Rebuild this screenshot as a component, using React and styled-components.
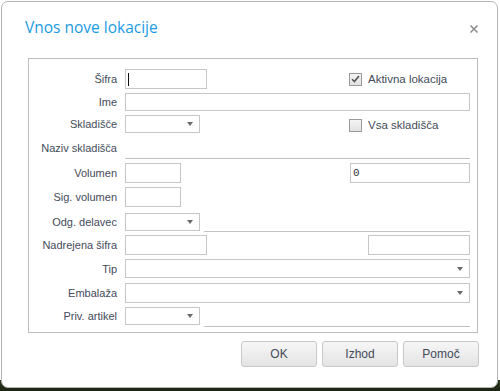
import React from "react";
import styled, { createGlobalStyle } from "styled-components";

const GlobalStyle = createGlobalStyle`
  html, body {
    margin: 0;
    padding: 0;
  }
  body {
    width: 500px;
    height: 391px;
    overflow: hidden;
    background: linear-gradient(#fff 0, #fff 380px, #2a3a1c 380px, #1c2414 391px);
    font-family: "Liberation Sans", Arial, sans-serif;
  }
`;

const Dialog = styled.div`
  box-sizing: border-box;
  margin: 1px 0 0 1px;
  width: 497px;
  height: 387px;
  background: #fff;
  border: 1px solid #b4b4b4;
  border-radius: 7px;
`;

const Header = styled.div`
  height: 56px;
  display: flex;
  align-items: flex-start;
  justify-content: space-between;
  padding: 0 18px 0 23px;
`;

const Title = styled.h1`
  margin: 14px 0 0;
  font-family: "Open Sans", "Noto Sans", sans-serif;
  font-weight: 400;
  font-size: 15.5px;
  line-height: 22px;
  color: #1b9be3;
`;

const Close = styled.button`
  margin-top: 22px;
  padding: 0;
  border: none;
  background: none;
  width: 10px;
  height: 10px;
  display: flex;
  cursor: pointer;
`;

const Fieldset = styled.div`
  box-sizing: border-box;
  margin-left: 26px;
  width: 450px;
  border: 1px solid #bdbdbd;
  padding: 10px 7px 6px 0;
  display: grid;
  grid-template-columns: 88px 345px;
  grid-template-rows: 24px 22px 26px 22px 24px 26px 22px 24px 24px 24px 19px;
  column-gap: 8px;
  align-items: start;
`;

const Label = styled.div`
  height: ${(p) => p.$h || 20}px;
  display: flex;
  align-items: center;
  justify-content: flex-end;
  font-size: 11px;
  color: #444b5a;
  white-space: nowrap;
`;

const Field = styled.div`
  display: flex;
  align-items: flex-start;
  gap: 4px;
`;

const TextBox = styled.div`
  box-sizing: border-box;
  width: ${(p) => p.$w || 345}px;
  height: ${(p) => p.$h || 20}px;
  margin-left: ${(p) => (p.$right ? "auto" : "0")};
  border: 1px solid #c6c6c6;
  background: #fff;
  display: flex;
  align-items: center;
  padding-left: 2px;
  font-family: "Liberation Mono", "DejaVu Sans Mono", monospace;
  font-size: 11px;
  color: #333;
`;

const Caret = styled.span`
  width: 1px;
  height: 13px;
  background: #111;
`;

const Select = styled.div`
  box-sizing: border-box;
  width: ${(p) => p.$w || 75}px;
  height: ${(p) => p.$h || 18}px;
  border: 1px solid #c6c6c6;
  background: #fff;
  display: flex;
  align-items: center;
  justify-content: flex-end;
  padding-right: 6px;
  flex-shrink: 0;
`;

const Arrow = styled.span`
  width: 0;
  height: 0;
  border-left: 3px solid transparent;
  border-right: 3px solid transparent;
  border-top: 4px solid #6a6a6a;
`;

const Underline = styled.div`
  flex: 1;
  height: ${(p) => p.$h || 18}px;
  border-bottom: 1px solid #c2c2c2;
`;

const Check = styled.label`
  margin-left: auto;
  width: 121px;
  height: 20px;
  display: flex;
  align-items: center;
  gap: 6px;
  font-size: 11.5px;
  color: #444b5a;
`;

const Box = styled.span`
  box-sizing: border-box;
  width: 13px;
  height: 13px;
  border: 1px solid #9a9a9a;
  background: linear-gradient(#f4f4f4, #e2e2e2);
  display: flex;
  align-items: center;
  justify-content: center;
`;

const Footer = styled.div`
  display: flex;
  justify-content: flex-end;
  gap: 5px;
  padding: 8px 18px 0 0;
`;

const Button = styled.button`
  box-sizing: border-box;
  width: 76px;
  height: 26px;
  border: 1px solid #c8c8c8;
  border-radius: 3px;
  background: linear-gradient(#f6f6f6, #e4e4e4);
  font-family: "Liberation Sans", Arial, sans-serif;
  font-size: 12px;
  color: #444b5a;
  cursor: pointer;
`;

const CheckBox = ({ checked, children }) => (
  <Check>
    <Box>
      {checked && (
        <svg width="9" height="8" viewBox="0 0 9 8">
          <path d="M1 4.2 L3.4 6.6 L8 1" fill="none" stroke="#555" strokeWidth="1.6" />
        </svg>
      )}
    </Box>
    {children}
  </Check>
);

const App = () => {
  return (
    <>
      <GlobalStyle />
      <Dialog>
        <Header>
          <Title>Vnos nove lokacije</Title>
          <Close aria-label="Zapri">
            <svg width="10" height="10" viewBox="0 0 10 10">
              <path d="M1.5 1.5 L8.5 8.5 M8.5 1.5 L1.5 8.5" stroke="#8a8a8a" strokeWidth="1.5" />
            </svg>
          </Close>
        </Header>

        <Fieldset>
          <Label>Šifra</Label>
          <Field>
            <TextBox $w={82}>
              <Caret />
            </TextBox>
            <CheckBox checked>Aktivna lokacija</CheckBox>
          </Field>

          <Label $h={18}>Ime</Label>
          <Field>
            <TextBox $h={18} />
          </Field>

          <Label $h={18}>Skladišče</Label>
          <Field>
            <Select>
              <Arrow />
            </Select>
            <CheckBox>Vsa skladišča</CheckBox>
          </Field>

          <Label $h={14}>Naziv skladišča</Label>
          <Field>
            <Underline $h={17} />
          </Field>

          <Label>Volumen</Label>
          <Field>
            <TextBox $w={56} />
            <TextBox $w={120} $right>0</TextBox>
          </Field>

          <Label>Sig. volumen</Label>
          <Field>
            <TextBox $w={56} />
          </Field>

          <Label $h={18}>Odg. delavec</Label>
          <Field>
            <Select>
              <Arrow />
            </Select>
            <Underline />
          </Field>

          <Label>Nadrejena šifra</Label>
          <Field>
            <TextBox $w={82} />
            <TextBox $w={102} $right />
          </Field>

          <Label $h={19}>Tip</Label>
          <Field>
            <Select $w={345} $h={19}>
              <Arrow />
            </Select>
          </Field>

          <Label>Embalaža</Label>
          <Field>
            <Select $w={345} $h={20}>
              <Arrow />
            </Select>
          </Field>

          <Label $h={18}>Priv. artikel</Label>
          <Field>
            <Select>
              <Arrow />
            </Select>
            <Underline $h={19} />
          </Field>
        </Fieldset>

        <Footer>
          <Button>OK</Button>
          <Button>Izhod</Button>
          <Button>Pomoč</Button>
        </Footer>
      </Dialog>
    </>
  );
};

export default App;
